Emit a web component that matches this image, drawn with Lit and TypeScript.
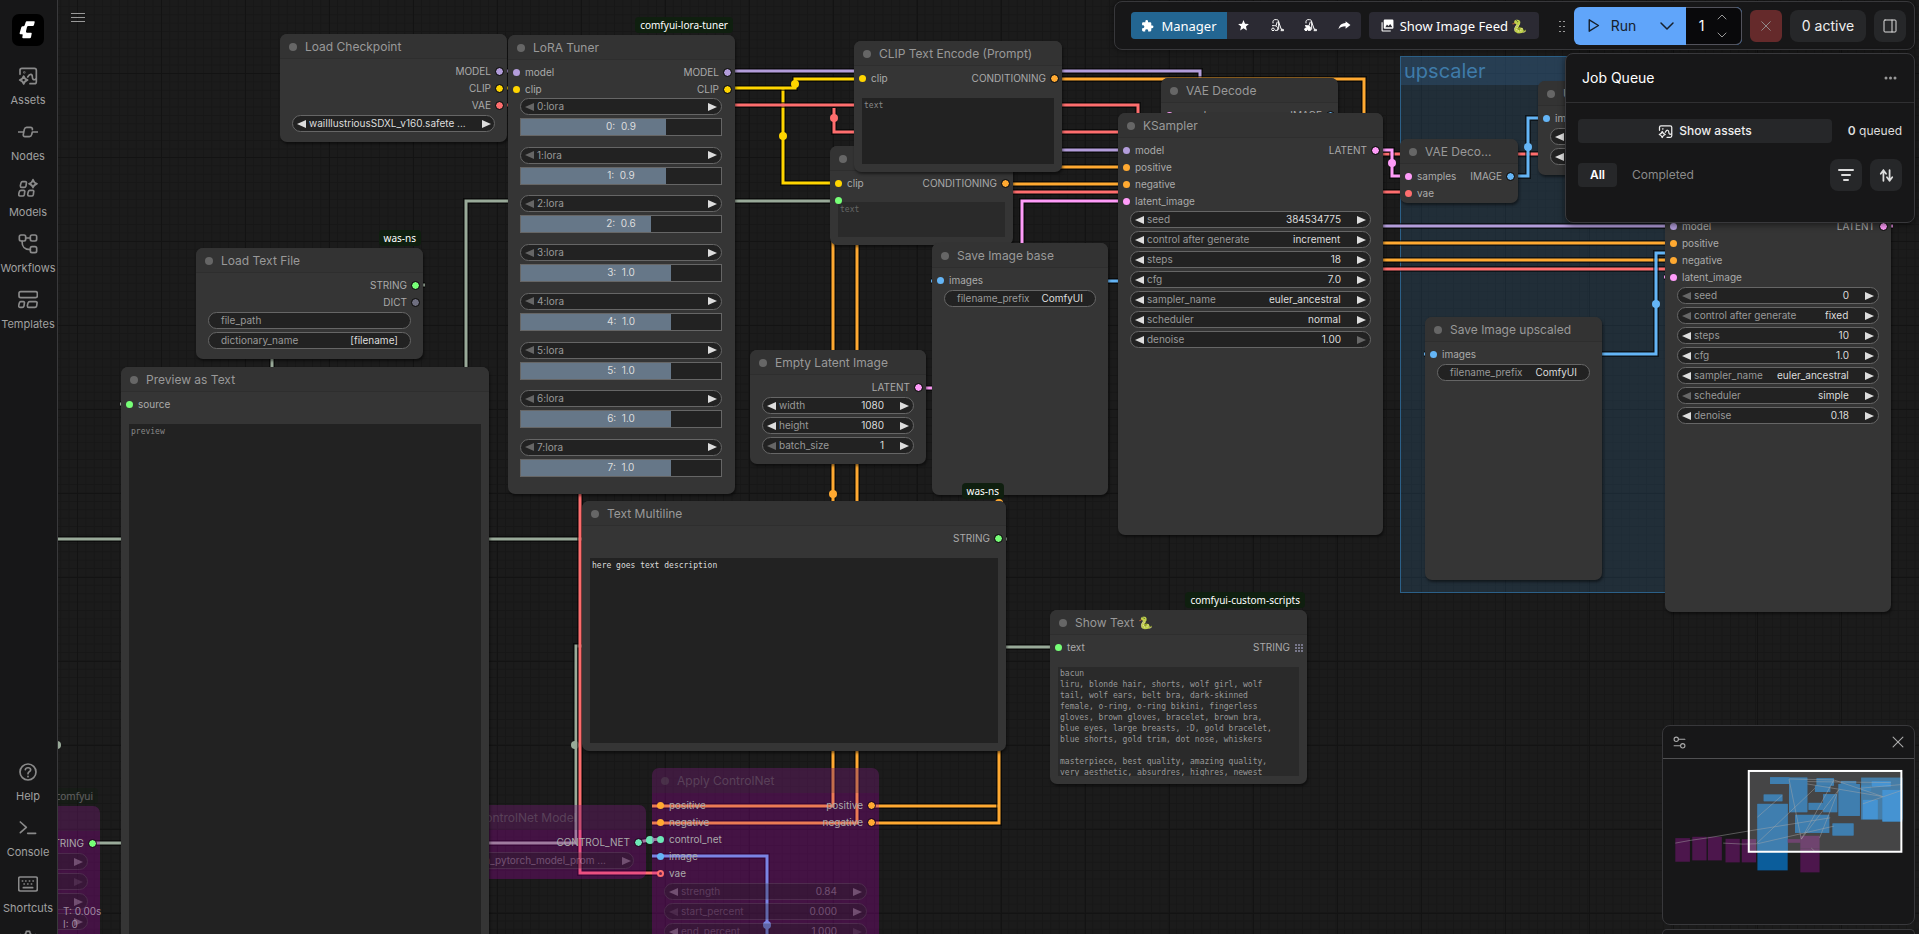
import { LitElement, html, svg, css, nothing } from "lit";
import { customElement, property } from "lit/decorators.js";
import { classMap } from "lit/directives/class-map.js";
import { styleMap } from "lit/directives/style-map.js";

type Slot = { name: string; color: string; kind?: "grid" | "ring" };
type Widget = {
  type: "number" | "combo" | "text";
  name: string;
  value?: string;
  min?: boolean;
  max?: boolean;
};
type GraphNode = {
  title: string;
  x: number;
  y: number;
  w: number;
  h: number;
  badge?: string;
  inputs?: Slot[];
  outputs?: Slot[];
  widgets?: Widget[];
  sliders?: number[];
  area?: { text?: string; placeholder?: string; disabled?: boolean; tight?: boolean };
  bypassed?: boolean;
};
type Link = { color: string; d: string; dots?: [number, number][] };

const C = {
  model: "#b39ddb",
  clip: "#ffd500",
  vae: "#ff6e6e",
  cond: "#ffa931",
  latent: "#ff9cf9",
  image: "#64b5f6",
  string: "#77ff77",
  dict: "#6f6f80",
  control: "#6ee7b7",
  link: "#99aa99",
};

const s = (name: string, color: string, kind?: Slot["kind"]): Slot => ({ name, color, kind });
const num = (name: string, value: string, min = false, max = false): Widget => ({ type: "number", name, value, min, max });
const combo = (name: string, value: string, min = false): Widget => ({ type: "combo", name, value, min });
const txt = (name: string, value: string): Widget => ({ type: "text", name, value });

const SHOW_TEXT = `bacun
liru, blonde hair, shorts, wolf girl, wolf
tail, wolf ears, belt bra, dark-skinned
female, o-ring, o-ring bikini, fingerless
gloves, brown gloves, bracelet, brown bra,
blue eyes, large breasts, :D, gold bracelet,
blue shorts, gold trim, dot nose, whiskers

masterpiece, best quality, amazing quality,
very aesthetic, absurdres, highres, newest`;

const NODES: GraphNode[] = [
  {
    title: "", x: -126, y: 806, w: 226, h: 200, badge: "comfyui", bypassed: true,
    outputs: [s("STRING", C.string)],
    widgets: [num("", ""), num("", "", false, true), num("", ""), num("", "")],
  },
  {
    title: "Load ControlNet Model", x: 420, y: 805, w: 226, h: 74, bypassed: true,
    outputs: [s("CONTROL_NET", C.control)],
    widgets: [combo("", "diffusion_pytorch_model_prom ...")],
  },
  {
    title: "Apply ControlNet", x: 652, y: 768, w: 227, h: 200, bypassed: true,
    inputs: [s("positive", C.cond), s("negative", C.cond), s("control_net", C.control), s("image", C.image), s("vae", C.vae, "ring")],
    outputs: [s("positive", C.cond), s("negative", C.cond)],
    widgets: [num("strength", "0.84"), num("start_percent", "0.000", true), num("end_percent", "1.000", false, true)],
  },
  {
    title: "Load Text File", x: 196, y: 248, w: 227, h: 111, badge: "was-ns",
    outputs: [s("STRING", C.string), s("DICT", C.dict)],
    widgets: [txt("file_path", ""), txt("dictionary_name", "[filename]")],
  },
  {
    title: "Preview as Text", x: 121, y: 367, w: 368, h: 640,
    inputs: [s("source", C.string)], area: { placeholder: "preview" },
  },
  {
    title: "Load Checkpoint", x: 280, y: 34, w: 227, h: 108,
    outputs: [s("MODEL", C.model), s("CLIP", C.clip), s("VAE", C.vae)],
    widgets: [combo("", "waiIllustriousSDXL_v160.safete ...")],
  },
  {
    title: "LoRA Tuner", x: 508, y: 35, w: 227, h: 459, badge: "comfyui-lora-tuner",
    inputs: [s("model", C.model), s("clip", C.clip)],
    outputs: [s("MODEL", C.model), s("CLIP", C.clip)],
    sliders: [0.9, 0.9, 0.6, 1, 1, 1, 1, 1],
  },
  {
    title: "", x: 830, y: 146, w: 183, h: 99,
    inputs: [s("clip", C.clip), s("", C.string)],
    outputs: [s("CONDITIONING", C.cond)],
    area: { placeholder: "text", disabled: true, tight: true },
  },
  {
    title: "CLIP Text Encode (Prompt)", x: 854, y: 41, w: 208, h: 131,
    inputs: [s("clip", C.clip)], outputs: [s("CONDITIONING", C.cond)],
    area: { placeholder: "text" },
  },
  {
    title: "Empty Latent Image", x: 750, y: 350, w: 176, h: 114,
    outputs: [s("LATENT", C.latent)],
    widgets: [num("width", "1080"), num("height", "1080"), num("batch_size", "1", true)],
  },
  {
    title: "Save Image base", x: 932, y: 243, w: 176, h: 252,
    inputs: [s("images", C.image)], widgets: [txt("filename_prefix", "ComfyUI")],
  },
  {
    title: "VAE Decode", x: 1161, y: 78, w: 177, h: 64,
    inputs: [s("samples", C.latent)], outputs: [s("IMAGE", C.image)],
  },
  {
    title: "KSampler", x: 1118, y: 113, w: 265, h: 422,
    inputs: [s("model", C.model), s("positive", C.cond), s("negative", C.cond), s("latent_image", C.latent)],
    outputs: [s("LATENT", C.latent)],
    widgets: [
      num("seed", "384534775"), combo("control after generate", "increment"), num("steps", "18"), num("cfg", "7.0"),
      combo("sampler_name", "euler_ancestral"), combo("scheduler", "normal"), num("denoise", "1.00", false, true),
    ],
  },
  {
    title: "VAE Deco...", x: 1400, y: 139, w: 118, h: 64,
    inputs: [s("samples", C.latent), s("vae", C.vae)], outputs: [s("IMAGE", C.image)],
  },
  {
    title: "Upscale Image", x: 1538, y: 81, w: 227, h: 94,
    inputs: [s("image", C.image)], widgets: [combo("", ""), num("", "")],
  },
  {
    title: "Save Image upscaled", x: 1425, y: 317, w: 177, h: 263,
    inputs: [s("images", C.image)], widgets: [txt("filename_prefix", "ComfyUI")],
  },
  {
    title: "", x: 1665, y: 189, w: 226, h: 423,
    inputs: [s("model", C.model), s("positive", C.cond), s("negative", C.cond), s("latent_image", C.latent)],
    outputs: [s("LATENT", C.latent)],
    widgets: [
      num("seed", "0", true), combo("control after generate", "fixed", true), num("steps", "10"), num("cfg", "1.0"),
      combo("sampler_name", "euler_ancestral"), combo("scheduler", "simple", true), num("denoise", "0.18"),
    ],
  },
  {
    title: "Show Text 🐍", x: 1050, y: 610, w: 257, h: 174, badge: "comfyui-custom-scripts",
    inputs: [s("text", C.string)], outputs: [s("STRING", C.dict, "grid")],
    area: { text: SHOW_TEXT, disabled: true },
  },
  {
    title: "Text Multiline", x: 582, y: 501, w: 424, h: 250, badge: "was-ns",
    outputs: [s("STRING", C.string)], area: { text: "here goes text description" },
  },
];

const LINKS: Link[] = [
  { color: C.link, d: "M272 350V380" },
  { color: C.link, d: "M466 380V201H838" },
  { color: C.link, d: "M48 539H590", dots: [[57, 745]] },
  { color: C.link, d: "M93 843H576V646H590", dots: [[575, 745]] },
  { color: C.link, d: "M415 285H425" },
  { color: C.link, d: "M120 404H129" },
  { color: C.link, d: "M998 539H1007" },
  { color: C.link, d: "M990 647H1058" },
  { color: C.model, d: "M499 71H516" },
  { color: C.clip, d: "M499 88H516" },
  { color: C.model, d: "M727 71H1200V120" },
  { color: C.model, d: "M1050 150H1126" },
  { color: C.model, d: "M1370 226H1673" },
  { color: C.clip, d: "M783 88V183H838", dots: [[783, 136]] },
  { color: C.clip, d: "M727 88H795V79H862", dots: [[795, 84]] },
  { color: C.vae, d: "M499 105H1138V130" },
  { color: C.vae, d: "M834 108V132H1130", dots: [[834, 118]] },
  { color: C.vae, d: "M1000 192H1409" },
  { color: C.vae, d: "M1370 154H1545" },
  { color: C.vae, d: "M1370 269H1675" },
  { color: C.vae, d: "M580 480V873H660" },
  { color: C.cond, d: "M1054 79H1364V130" },
  { color: C.cond, d: "M1050 167H1126" },
  { color: C.cond, d: "M1005 184H1126" },
  { color: C.cond, d: "M1370 243H1673" },
  { color: C.cond, d: "M1370 260H1673" },
  { color: C.cond, d: "M833 230V806H652", dots: [[833, 494]] },
  { color: C.cond, d: "M857 230V823H652" },
  { color: C.cond, d: "M871 806H998", dots: [[999, 503]] },
  { color: C.cond, d: "M871 823H999V510" },
  { color: C.latent, d: "M917 388H940" },
  { color: C.latent, d: "M1022 260V201H1126" },
  { color: C.latent, d: "M1375 150H1392V176H1409", dots: [[1392, 163]] },
  { color: C.latent, d: "M1664 277H1673" },
  { color: C.latent, d: "M1883 226H1893" },
  { color: C.image, d: "M931 281H940" },
  { color: C.image, d: "M1100 281H1126" },
  { color: C.image, d: "M1424 354H1434" },
  { color: C.image, d: "M1590 354H1656V253H1670", dots: [[1656, 304]] },
  { color: C.image, d: "M1510 176H1528V118H1546", dots: [[1528, 147]] },
  { color: C.image, d: "M652 856H767V934", dots: [[767, 925]] },
  { color: C.link, d: "M638 842L650 840L660 839" },
];

/* ---------- icons ---------- */
const sparkle = (x: number, y: number, r: number) =>
  svg`<path d="M${x} ${y - r}c2 ${r - 4} 4 ${r - 3} ${r} ${r}c${4 - r} 3 ${2 - r} 4 ${-r} ${r}c-2 ${4 - r}-4 ${3 - r}-${r}-${r}c${r - 4}-3 ${r - 2}-4 ${r}-${r}z"/>`;
const stroke = (body: unknown, size = 20, sw = 5, vb = "0 0 60 60") => html`<svg
  width=${size} height=${size} viewBox=${vb} fill="none" stroke="currentColor" stroke-width=${sw}
  stroke-linecap="round" stroke-linejoin="round" aria-hidden="true">${body}</svg>`;

const ICON = {
  assets: svg`<path d="M6 25V13a6 6 0 0 1 6-6H49a6 6 0 0 1 6 6V47a6 6 0 0 1-6 6H36"/><circle cx="19" cy="19" r="1"/><path d="M29 33c7-12 14-9 14-1s4 12 11 7"/>${sparkle(17, 42, 12)}`,
  nodes: svg`<path d="M1 30h14M59 30H43l-2 8c-1 4-3 6-7 6H21c-4 0-6-3-5-7l3-15c1-4 3-6 7-6H37c5 0 7 3 6 7"/>`,
  models: svg`${sparkle(45, 17, 12)}<path d="M13 11h9c3 0 4 2 3 5l-1 8c-1 3-2 4-5 4h-8c-3 0-4-2-4-5l2-8c1-3 2-4 4-4zM9 37h8c3 0 4 2 3 5l-1 8c-1 3-2 4-5 4H6c-3 0-4-2-4-5l2-8c1-3 2-4 5-4zM35 37h9c3 0 4 2 3 5l-1 8c-1 3-2 4-5 4h-8c-3 0-4-2-4-5l2-8c1-3 2-4 4-4z"/>`,
  workflows: svg`<rect x="4" y="3" width="19" height="18" rx="5"/><rect x="37" y="3" width="19" height="18" rx="5"/><rect x="37" y="38" width="19" height="18" rx="5"/><path d="M23 12h14M12 21c0 18 6 26 25 26"/>`,
  templates: svg`<rect x="3" y="5" width="55" height="18" rx="5"/><path d="M8 35h8c3 0 4 2 3 5l-1 8c-1 3-2 4-5 4H6c-3 0-4-2-4-5l2-8c1-3 2-4 4-4zM35 35h18c3 0 5 2 4 5l-1 8c-1 3-2 4-5 4H32c-3 0-4-2-4-5l2-8c1-3 2-4 5-4z"/>`,
  help: svg`<circle cx="30" cy="30" r="24"/><path d="M22 23c1-7 15-8 16 0c0 6-8 6-8 12M30 43v1"/>`,
  console: svg`<path d="M7 12l18 16L7 44M29 46h24"/>`,
  keyboard: svg`<rect x="2" y="9" width="56" height="42" rx="5"/><path d="M13 21h1M23 21h1M34 21h1M45 21h1M18 30h1M29 30h1M40 30h1M16 41h28"/>`,
  gear: svg`<circle cx="30" cy="32" r="8"/><path d="M25 4h10l2 8 8 4 8-2 5 9-6 6v7l6 6-5 8-8-2-8 4-2 8H25l-2-8-8-4-8 2-5-8 6-6v-7l-6-6 5-9 8 2 8-4z"/>`,
};

@customElement("comfy-node")
class ComfyNode extends LitElement {
  @property({ attribute: false }) node!: GraphNode;

  static styles = css`
    :host { display: block; isolation: isolate; }
    .node {
      position: relative; box-sizing: border-box; height: 100%; display: flex; flex-direction: column;
      background: #353535; border-radius: 7px; box-shadow: 1px 2px 3px rgba(0, 0, 0, 0.5);
      color: #aaa; font: 10px/17px Inter, sans-serif;
    }
    .badge {
      position: absolute; right: 2px; bottom: calc(100% + 2px); padding: 0 5px; border-radius: 4px;
      background: #0f1f0f; color: #fff; font: 10px/16px "Noto Sans", sans-serif; white-space: nowrap;
    }
    header {
      flex: none; box-sizing: border-box; height: 25px; display: flex; align-items: center; gap: 8px; padding-left: 9px;
      background: #333; border-bottom: 1px solid #2e2e2e; border-radius: 7px 7px 0 0;
      color: #999; font-size: 12px; line-height: 24px; white-space: nowrap;
    }
    h2 { margin: 0; padding-top: 1px; font: inherit; }
    .dot { width: 8px; height: 8px; margin-top: 1px; border-radius: 50%; background: #666; }
    .slots { position: relative; z-index: 1; display: flex; justify-content: space-between; padding: 4px 4px 0 5px; }
    .slot { display: flex; align-items: center; gap: 5px; height: 17px; }
    .out { justify-content: flex-end; }
    .pin { box-sizing: border-box; width: 7px; height: 7px; border-radius: 50%; background: var(--c); }
    .out .pin { outline: 1px solid #111; }
    .pin.ring { background: #6a2050; border: 2px solid var(--c); }
    .matrix {
      width: 8px; height: 8px;
      background:
        linear-gradient(90deg, transparent 2px, #353535 2px) 0 0 / 3px 3px,
        linear-gradient(#77778a 2px, transparent 2px) 0 0 / 3px 3px;
    }
    .widgets { display: flex; flex-direction: column; gap: 3px; padding: 1px 12px 0; }
    .pill {
      box-sizing: border-box; height: 17px; display: flex; align-items: center; padding: 0 4px;
      background: #222; border: 1px solid #666; border-radius: 9px; color: #999; line-height: 15px; white-space: nowrap;
    }
    .pill.plain { padding: 0 12px; }
    .pill label { flex: none; }
    button { all: unset; flex: none; display: flex; width: 12px; height: 15px; align-items: center; color: #ddd; }
    button:last-child { justify-content: flex-end; width: 25px; }
    button:disabled { color: #666; }
    input, select, textarea { font: inherit; color: #ddd; background: none; border: 0; padding: 0; margin: 0; outline: 0; border-radius: 0; }
    .pill input { flex: 1; min-width: 0; height: 15px; text-align: right; }
    select { appearance: none; margin-left: auto; height: 15px; line-height: 15px; }
    textarea {
      flex: 1; box-sizing: border-box; resize: none; overflow: hidden; margin: 11px 8px 8px; padding: 2px 2px 0;
      background: #222; color: #ddd; font: 8px/11px "DejaVu Sans Mono", monospace;
    }
    textarea::placeholder { color: #888; }
    textarea:disabled { background: #2a2a2a; color: #999; padding-top: 1px; }
    textarea:disabled::placeholder { color: #666; }
    textarea.tight { margin-top: -7px; padding-top: 2px; }
    .pairs { flex: 1; display: flex; flex-direction: column; justify-content: space-between; padding: 0 13px 17px 12px; }
    .pair { display: flex; flex-direction: column; gap: 3px; }
    .slider { display: grid; }
    .slider > * { grid-area: 1 / 1; }
    .slider input {
      appearance: none; box-sizing: border-box; width: 100%; height: 18px; border: 1px solid #666;
      background: linear-gradient(90deg, #678 var(--fill), #222 var(--fill));
    }
    .slider input::-webkit-slider-thumb { appearance: none; width: 1px; height: 16px; background: transparent; }
    .slider label { text-align: center; white-space: pre; color: #ddd; pointer-events: none; z-index: 1; }

    .bypassed { background: rgba(181, 0, 181, 0.27); box-shadow: none; }
    .bypassed header { background: rgba(40, 60, 40, 0.2); border-color: transparent; }
    .bypassed h2, .bypassed .badge { opacity: 0.3; }
    .bypassed .dot { opacity: 0.3; }
    .bypassed .widgets { opacity: 0.3; }
    .bypassed .out .pin { outline-color: #220a22; }
  `;

  private slotRow(slot: Slot, out: boolean) {
    const pin =
      slot.kind === "grid"
        ? html`<span class="matrix"></span>`
        : html`<span class=${classMap({ pin: true, ring: slot.kind === "ring" })} style=${styleMap({ "--c": slot.color })}></span>`;
    return html`<div class=${classMap({ slot: true, out })}>
      ${out ? html`<span>${slot.name}</span>${pin}` : html`${pin}<span>${slot.name}</span>`}
    </div>`;
  }

  private arrow(dir: "left" | "right", disabled = false) {
    const d = dir === "left" ? "M9 0v8L0 4z" : "M0 0v8l9-4z";
    return html`<button type="button" ?disabled=${disabled} aria-label=${dir === "left" ? "Previous" : "Next"}>
      <svg width="9" height="8" viewBox="0 0 9 8" fill="currentColor"><path d=${d} /></svg>
    </button>`;
  }

  private widget(w: Widget, i: number) {
    const id = `w${i}`;
    if (w.type === "text")
      return html`<div class="pill plain"><label for=${id}>${w.name}</label><input id=${id} .value=${w.value ?? ""} /></div>`;
    const field =
      w.type === "number"
        ? html`<input id=${id} inputmode="decimal" aria-label=${w.name || "value"} .value=${w.value ?? ""} />`
        : html`<select id=${id} aria-label=${w.name || "value"}><option>${w.value}</option></select>`;
    return html`<div class="pill">
      ${this.arrow("left", w.min)}${w.name ? html`<label for=${id}>${w.name}</label>` : nothing}${field}${this.arrow("right", w.max)}
    </div>`;
  }

  render() {
    const n = this.node;
    return html`<section class=${classMap({ node: true, bypassed: !!n.bypassed })}>
      ${n.badge ? html`<span class="badge">${n.badge}</span>` : nothing}
      <header><span class="dot"></span><h2>${n.title}</h2></header>
      <div class="slots">
        <div>${(n.inputs ?? []).map((x) => this.slotRow(x, false))}</div>
        <div>${(n.outputs ?? []).map((x) => this.slotRow(x, true))}</div>
      </div>
      ${n.widgets ? html`<div class="widgets">${n.widgets.map((w, i) => this.widget(w, i))}</div>` : nothing}
      ${n.sliders
        ? html`<div class="pairs">
            ${n.sliders.map(
              (v, i) => html`<div class="pair">
                <div class="pill">
                  ${this.arrow("left", true)}<label for="c${i}">${i}:lora</label><select id="c${i}"></select>${this.arrow("right")}
                </div>
                <div class="slider">
                  <input id="r${i}" type="range" min="-2" max="2" step="0.1" .value=${String(v)}
                    style=${styleMap({ "--fill": `${((v + 2) / 4) * 100}%` })} />
                  <label for="r${i}">${i}:  ${v.toFixed(1)}</label>
                </div>
              </div>`
            )}
          </div>`
        : nothing}
      ${n.area
        ? html`<textarea class=${classMap({ tight: !!n.area.tight })} aria-label=${n.title || "text"} spellcheck="false"
            ?disabled=${n.area.disabled} placeholder=${n.area.placeholder ?? ""} .value=${n.area.text ?? ""}></textarea>`
        : nothing}
    </section>`;
  }
}

@customElement("comfy-sidebar")
class ComfySidebar extends LitElement {
  static styles = css`
    :host { display: block; }
    nav {
      box-sizing: border-box; height: 100%; overflow: hidden; display: flex; flex-direction: column; align-items: stretch;
      padding-right: 1px; background: #171718; border-right: 1px solid #39393b; font: 11px/14px Inter, sans-serif; color: #8a8a8a;
    }
    .logo { flex: none; align-self: center; margin: 14px 0; width: 32px; height: 32px; }
    .bottom { margin: auto 0 -46px; }
    button {
      all: unset; box-sizing: border-box; width: 100%; height: 56px; padding-top: 6px;
      display: flex; flex-direction: column; align-items: center; gap: 7px;
    }
    span { color: #a0a0a0; }
  `;
  private item(icon: unknown, label: string) {
    return html`<button type="button">${stroke(icon)}<span>${label}</span></button>`;
  }
  render() {
    return html`<nav aria-label="Side toolbar">
      <svg class="logo" viewBox="0 0 96 96" aria-label="ComfyUI">
        <rect width="96" height="96" rx="21" fill="#000" />
        <path fill="#fff" d="M44 22h22q3 0 2 3l-2 8q-1 3-4 3H49q-3 0-4 3l-3 13q-1 4 3 4h12q3 0 2 3l-2 11q-1 3-4 3H34q-4 0-3-4l1-5q1-3-2-3h-4q-4 0-3-4l5-17q1-3 4-3h2q3 0 4-3l3-9q1-3 3-3z" />
      </svg>
      <div>
        ${this.item(ICON.assets, "Assets")}${this.item(ICON.nodes, "Nodes")}${this.item(ICON.models, "Models")}
        ${this.item(ICON.workflows, "Workflows")}${this.item(ICON.templates, "Templates")}
      </div>
      <div class="bottom">
        ${this.item(ICON.help, "Help")}${this.item(ICON.console, "Console")}${this.item(ICON.keyboard, "Shortcuts")}
        ${this.item(ICON.gear, "")}
      </div>
    </nav>`;
  }
}

@customElement("comfy-actionbar")
class ComfyActionbar extends LitElement {
  static styles = css`
    :host { display: block; }
    .bar {
      box-sizing: border-box; height: 49px; display: flex; align-items: center; gap: 8px; padding: 0 8px 0 16px;
      background: #171718; border: 1px solid #38383b; border-radius: 8px; box-shadow: 0 0 6px rgba(0, 0, 0, 0.5);
      font: 14px/20px Inter, sans-serif; color: #fff;
    }
    button { all: unset; box-sizing: border-box; display: flex; align-items: center; justify-content: center; }
    .group { display: flex; height: 27px; border-radius: 4px; overflow: hidden; background: #2b2a33; font: 13px/20px "Noto Sans", sans-serif; }
    .manager { width: 96px; gap: 7px; background: #236692; }
    .tools { display: grid; grid-template-columns: repeat(4, 1fr); width: 134px; }
    .feed { width: 170px; gap: 6px; }
    .handle { width: 9px; height: 13px; margin: 0 -1px 0 11px; background: radial-gradient(circle, #999 1px, transparent 1px) 0 0 / 4px 5px; }
    .run { display: flex; height: 38px; border-radius: 6px; overflow: hidden; background: #60a5fa; color: #16202c; }
    .go { width: 73px; gap: 9px; }
    .more { width: 39px; }
    .count { box-sizing: border-box; width: 56px; display: flex; align-items: center; background: #09090b; border: 1px solid #52525b; border-left: 0; border-radius: 0 6px 6px 0; color: #fff; }
    .count input { all: unset; width: 31px; text-align: center; font: 14px/20px Inter, sans-serif; }
    .steps { display: flex; flex-direction: column; gap: 8px; color: #999; }
    .sq { width: 32px; height: 32px; border-radius: 8px; background: #262729; color: #ddd; }
    .stop { background: #652a2b; color: #999; border-radius: 6px; }
    .active { height: 32px; width: 76px; border-radius: 8px; background: #262729; color: #eee; }
  `;
  render() {
    return html`<div class="bar">
      <div class="group">
        <button type="button" class="manager">
          <svg width="13" height="14" viewBox="0 0 24 24" fill="currentColor"><path d="M20.5 11H19V7a2 2 0 0 0-2-2h-4V3.500a2.500 2.500 0 0 0-5 0V5H4a2 2 0 0 0-2 2v3.800h1.500a2.700 2.700 0 0 1 0 5.400H2V20a2 2 0 0 0 2 2h3.800v-1.500a2.700 2.700 0 0 1 5.400 0V22H17a2 2 0 0 0 2-2v-4h1.500a2.500 2.500 0 0 0 0-5z" /></svg>Manager
        </button>
        <div class="tools">
          <button type="button" aria-label="Favorites">
            <svg width="13" height="13" viewBox="0 0 24 24" fill="currentColor"><path d="M12 17.300 18.200 21l-1.600-7L22 9.200l-7.200-.6L12 2 9.200 8.600 2 9.200 7.500 14l-1.700 7z" /></svg>
          </button>
          ${[false, true].map(
            (full) => html`<button type="button" aria-label=${full ? "Unload all" : "Unload models"}>
              <svg width="13" height="13" viewBox="0 0 39 39" fill="none" stroke="currentColor" stroke-width="3">
                <path d="M6 13V7c0-2 2-4 5-5h6c4 0 6 3 6 7l9 25M19 8l-4 12M23 8V32" />
                <path d="M3 20h8c6 0 9 4 9 9v5H12" fill=${full ? "currentColor" : "none"} />
                <circle cx="6" cy="31" r="4" fill=${full ? "currentColor" : "none"} /><path d="M29 35h9v-3l-7-2" />
              </svg>
            </button>`
          )}
          <button type="button" aria-label="Share">
            <svg width="13" height="13" viewBox="0 0 24 24" fill="currentColor"><path d="M14 4l9 7-9 7v-4.500c-6 0-10 1.500-13 5.500 1-6 4-11 13-11.500z" /></svg>
          </button>
        </div>
      </div>
      <div class="group">
        <button type="button" class="feed">
          <svg width="13" height="13" viewBox="0 0 24 24" fill="currentColor"><path d="M1 6v15a2 2 0 0 0 2 2h15v-2H3V6zM7 1a2 2 0 0 0-2 2v13a2 2 0 0 0 2 2h14a2 2 0 0 0 2-2V3a2 2 0 0 0-2-2zm1 14 3-5 3 3 3-4 4 6z" fill-rule="evenodd" /></svg>Show Image Feed 🐍
        </button>
      </div>
      <span class="handle"></span>
      <div class="run">
        <button type="button" class="go">${stroke(svg`<path d="M8 4v16l13-8z" transform="translate(-2)"/>`, 17, 2, "0 0 24 24")}Run</button>
        <button type="button" class="more" aria-label="Run options">${stroke(svg`<path d="M4 8l8 8 8-8"/>`, 18, 2, "0 0 24 24")}</button>
        <div class="count">
          <input aria-label="Batch count" value="1" />
          <div class="steps">
            ${stroke(svg`<path d="M1 6l4-4 4 4"/>`, 10, 1, "0 0 10 8")}${stroke(svg`<path d="M1 2l4 4 4-4"/>`, 10, 1, "0 0 10 8")}
          </div>
        </div>
      </div>
      <button type="button" class="sq stop" aria-label="Cancel">${stroke(svg`<path d="M2 2l10 10M12 2L2 12"/>`, 12, 1, "0 0 14 14")}</button>
      <button type="button" class="active">0 active</button>
      <button type="button" class="sq" aria-label="Toggle panel">${stroke(svg`<rect x="2" y="2" width="12" height="12" rx="1"/><path d="M10 2v12"/>`, 16, 1, "0 0 16 16")}</button>
    </div>`;
  }
}

@customElement("comfy-queue")
class ComfyQueue extends LitElement {
  static styles = css`
    :host { display: block; }
    section {
      box-sizing: border-box; width: 350px; height: 170px; background: #171718; border: 1px solid #38383b; border-radius: 8px;
      font: 12px/16px Inter, sans-serif; color: #ddd; box-shadow: 0 2px 6px rgba(0, 0, 0, 0.5);
    }
    header { height: 48px; display: flex; align-items: center; justify-content: space-between; padding: 0 17px 0 16px; border-bottom: 1px solid #303032; }
    h2 { margin: 0; font: 14px/20px Inter, sans-serif; color: #fff; }
    button { all: unset; box-sizing: border-box; display: flex; align-items: center; justify-content: center; gap: 6px; }
    .row { display: flex; align-items: center; padding: 16px 12px 0; }
    .assets { flex: 1; height: 24px; margin-right: 16px; border-radius: 4px; background: #262729; color: #eee; font-weight: 500; }
    .tabs { display: flex; flex: 1; gap: 15px; }
    .tab { height: 24px; color: #8a8a8a; }
    .tab.on { width: 39px; border-radius: 4px; background: #262729; color: #fff; font-weight: 600; }
    .sq { width: 32px; height: 32px; margin-left: 8px; border-radius: 8px; background: #262729; color: #ddd; }
    b { font-weight: 600; }
  `;
  render() {
    return html`<section>
      <header>
        <h2>Job Queue</h2>
        <button type="button" aria-label="More">
          <svg width="13" height="4" viewBox="0 0 13 4" fill="#999"><circle cx="2" cy="2" r="1.500" /><circle cx="6.500" cy="2" r="1.500" /><circle cx="11" cy="2" r="1.500" /></svg>
        </button>
      </header>
      <div class="row">
        <button type="button" class="assets">${stroke(ICON.assets, 15, 5)}Show assets</button>
        <span><b>0</b> queued</span>
      </div>
      <div class="row">
        <div class="tabs"><button type="button" class="tab on">All</button><button type="button" class="tab">Completed</button></div>
        <button type="button" class="sq" aria-label="Filter">${stroke(svg`<path d="M1 3h14M4 8h8M6 13h4"/>`, 16, 2, "0 0 16 16")}</button>
        <button type="button" class="sq" aria-label="Sort">${stroke(svg`<path d="M2 6l3-4 3 4M5 2v12M9 10l3 4 3-4M12 14V2"/>`, 15, 2, "0 0 17 16")}</button>
      </div>
    </section>`;
  }
}

@customElement("comfy-minimap")
class ComfyMinimap extends LitElement {
  static styles = css`
    :host { display: block; }
    section { box-sizing: border-box; width: 253px; height: 200px; display: flex; flex-direction: column; background: #171718; border: 1px solid #38383b; border-radius: 8px; overflow: hidden; }
    header { height: 32px; display: flex; align-items: center; justify-content: space-between; padding: 0 10px; border-bottom: 1px solid #505052; color: #aaa; }
    button { all: unset; display: flex; }
    .map { flex: 1; width: 100%; }
  `;
  render() {
    const blue: [number, number, number, number][] = [
      [391, 202, 58, 20], [448, 203, 55, 104], [372, 254, 56, 20], [353, 282, 91, 200], [531, 205, 52, 22], [526, 227, 46, 19],
      [507, 279, 44, 21], [551, 253, 42, 54], [604, 213, 46, 20], [597, 222, 64, 96], [466, 315, 103, 54], [579, 341, 63, 36],
      [665, 227, 30, 17], [697, 214, 57, 16], [670, 270, 45, 58], [729, 240, 60, 95],
    ];
    const purple: [number, number, number, number][] = [
      [106, 385, 44, 71], [157, 381, 43, 71], [204, 381, 42, 71], [257, 387, 43, 71], [306, 388, 43, 70], [426, 388, 57, 11], [482, 378, 58, 39], [482, 417, 58, 71],
    ];
    return html`<section>
      <header>
        <button type="button" aria-label="Minimap settings">${stroke(svg`<circle cx="3" cy="3" r="2"/><path d="M5 3h6M1 9h6"/><circle cx="9" cy="9" r="2"/>`, 13, 1, "0 0 12 12")}</button>
        <button type="button" aria-label="Close minimap">${stroke(svg`<path d="M1 1l9 9M10 1l-9 9"/>`, 12, 1, "0 0 11 11")}</button>
      </header>
      <svg class="map" viewBox="69 147 755 493" preserveAspectRatio="xMinYMin">
        <rect x="665" y="203" width="124" height="126" fill="#1a4a70" />
        ${blue.map(([x, y, w, h]) => svg`<rect x=${x} y=${y} width=${w} height=${h} fill="#0b5d9b"/>`)}
        ${purple.map(([x, y, w, h]) => svg`<rect x=${x} y=${y} width=${w} height=${h} fill="#4c164c"/>`)}
        <rect x="327" y="183" width="459" height="243" fill="#fff" fill-opacity="0.2" />
        ${blue.slice(0, 3).concat(blue.slice(4, 14)).map(([x, y, w, h]) => svg`<rect x=${x} y=${y} width=${w} height=${h} fill="#3f7eaf"/>`)}
        <rect x="353" y="282" width="91" height="143" fill="#3f7eaf" />
        <rect x="665" y="203" width="124" height="126" fill="#4490c8" fill-opacity="0.45" />
        <rect x="670" y="270" width="45" height="58" fill="#4593d2" /><rect x="729" y="240" width="58" height="95" fill="#4593d2" />
        <rect x="697" y="214" width="57" height="16" fill="#4593d2" />
        <g stroke="#aaa" stroke-width="3" opacity="0.45" fill="none">
          <path d="M106 400L150 392L205 384L330 363L572 324M353 322L428 256M350 402L526 235M448 207L583 210M448 207L485 388L583 210M485 388L597 240M540 384L597 240M503 222L730 260M503 215L755 218M353 402L583 349M583 210L730 260M661 235L785 224M670 282L785 242M250 400L310 403L350 402M515 415L525 424" />
        </g>
        <rect x="327" y="183" width="459" height="243" fill="none" stroke="#fff" stroke-width="6" />
      </svg>
    </section>`;
  }
}

@customElement("app-root")
class AppRoot extends LitElement {
  static styles = css`
    :host {
      display: grid; grid-template-columns: 58px 1fr; grid-template-rows: 100vh; overflow: hidden;
      background: #1b1b1b; font-family: Inter, sans-serif;
    }
    .canvas {
      grid-area: 1 / 1 / 2 / 3; position: relative; overflow: hidden;
      background:
        linear-gradient(90deg, #131313 1px, transparent 1px) 77px 73px / 84px 84px,
        linear-gradient(#131313 1px, transparent 1px) 77px 73px / 84px 84px,
        linear-gradient(90deg, #171717 1px, transparent 1px) 77px 73px / calc(84px / 10) calc(84px / 10),
        linear-gradient(#171717 1px, transparent 1px) 77px 73px / calc(84px / 10) calc(84px / 10),
        #1b1b1b;
    }
    .group {
      position: absolute; box-sizing: border-box; background: rgba(55, 112, 155, 0.23); border: 1px solid #2c6088;
      color: #3f7ba9; font: 20px/28px Inter, sans-serif;
    }
    .group h2 { margin: 0; padding-left: 3px; font: inherit; background: rgba(63, 125, 180, 0.22); }
    .links { position: absolute; inset: 0; width: 100%; height: 100%; fill: none; }
    .node { position: absolute; }
    .stats { position: absolute; margin: 0; color: #a08aa0; font: 10px/13px Inter, sans-serif; white-space: pre; }
    .side { grid-area: 1 / 1; z-index: 2; min-height: 0; }
    .overlay { grid-area: 1 / 2; z-index: 1; display: flex; flex-direction: column; align-items: flex-end; padding: 1px 4px 0 0; min-height: 0; }
    .top { align-self: stretch; display: flex; justify-content: space-between; align-items: flex-start; margin-bottom: 3px; }
    .menu { all: unset; display: flex; padding: 11px 13px; color: #999; }
    .map { margin-top: auto; }
    .zoom { box-sizing: border-box; width: 253px; height: 5px; margin-top: 4px; background: #171718; border: 1px solid #38383b; border-bottom: 0; border-radius: 8px 8px 0 0; }
  `;
  render() {
    return html`
      <main class="canvas">
        <div class="group" style=${styleMap({ left: "1400px", top: "56px", width: "491px", height: "537px" })}><h2>upscaler</h2></div>
        <svg class="links" aria-hidden="true">
          ${LINKS.map(
            (l) => svg`<path d=${l.d} stroke="#000" stroke-opacity="0.55" stroke-width="6"/><path d=${l.d} stroke=${l.color} stroke-width="3"/>
              ${(l.dots ?? []).map(([x, y]) => svg`<circle cx=${x} cy=${y} r="4" fill=${l.color}/>`)}`
          )}
          <circle cx="650" cy="840" r="4" fill=${C.control} />
        </svg>
        ${NODES.map(
          (n) => html`<comfy-node class="node" .node=${n}
            style=${styleMap({ left: `${n.x}px`, top: `${n.y}px`, width: `${n.w}px`, height: `${n.h}px` })}></comfy-node>`
        )}
        <p class="stats" style=${styleMap({ left: "63px", top: "905px" })}>T: 0.00s<br />I: 0</p>
      </main>
      <comfy-sidebar class="side"></comfy-sidebar>
      <div class="overlay">
        <div class="top">
          <button type="button" class="menu" aria-label="Menu">
            <svg width="14" height="11" viewBox="0 0 14 11" fill="currentColor"><path d="M0 1h14v1H0zM0 5h14v1H0zM0 9h14v1H0z" /></svg>
          </button>
          <comfy-actionbar></comfy-actionbar>
        </div>
        <comfy-queue></comfy-queue>
        <comfy-minimap class="map"></comfy-minimap>
        <div class="zoom"></div>
      </div>
    `;
  }
}
